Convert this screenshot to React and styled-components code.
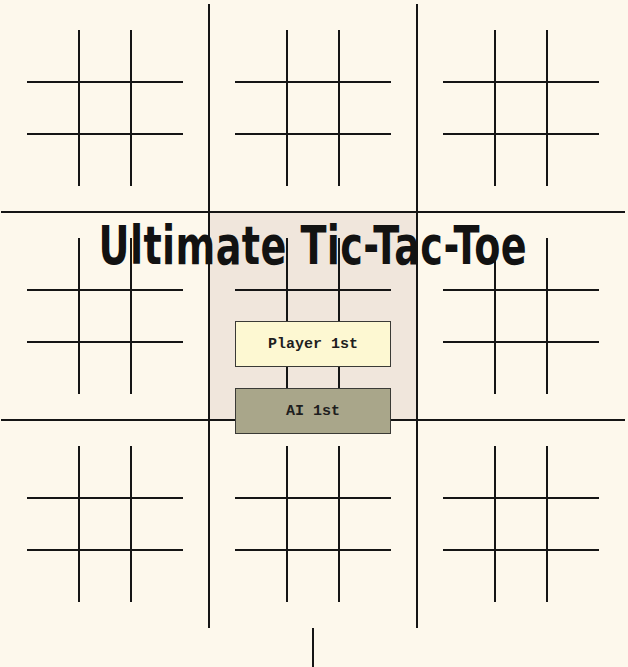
import React from "react";
import styled, { createGlobalStyle } from "styled-components";

const Global = createGlobalStyle`
  html, body { margin: 0; padding: 0; background: #fdf8ec; overflow: hidden; }
  body { font-family: "Liberation Sans", Arial, sans-serif; }
`;

const Page = styled.div`
  width: 624px;
  margin: 4px 0 0 1px;
  display: flex;
  flex-direction: column;
  align-items: center;
`;

const line = (a, b) =>
  `transparent ${a}px, #151515 ${a}px, #151515 ${b}px, transparent ${b}px`;

const Board = styled.div`
  position: relative;
  width: 624px;
  height: 624px;
  display: grid;
  grid-template-columns: repeat(3, 208px);
  grid-template-rows: repeat(3, 208px);
  background:
    linear-gradient(to right, ${line(207, 209)}, ${line(415, 417)}),
    linear-gradient(to bottom, ${line(207, 209)}, ${line(415, 417)});
`;

const BigCell = styled.div`
  padding: 1px;
  box-sizing: border-box;
  display: flex;
  align-items: center;
  justify-content: center;
  background: ${(p) => (p.$active ? "#f0e6dc" : "transparent")};
  background-clip: content-box;
`;

const SmallBoard = styled.div`
  width: 156px;
  height: 156px;
  display: grid;
  grid-template-columns: repeat(3, 52px);
  grid-template-rows: repeat(3, 52px);
  background:
    linear-gradient(to right, ${line(51, 53)}, ${line(103, 105)}),
    linear-gradient(to bottom, ${line(51, 53)}, ${line(103, 105)});
`;

const SmallCell = styled.div``;

const Overlay = styled.div`
  position: absolute;
  inset: 0;
  display: flex;
  flex-direction: column;
  align-items: center;
  padding-top: 215px;
  box-sizing: border-box;
`;

const Title = styled.h1`
  margin: 0;
  font-family: "DejaVu Sans Condensed", "Liberation Sans", sans-serif;
  font-weight: 700;
  font-size: 53px;
  line-height: 54px;
  letter-spacing: 0.5px;
  color: #121212;
  white-space: nowrap;
  transform: scaleX(0.8);
`;

const MenuButton = styled.button`
  width: 156px;
  height: 46px;
  margin-top: ${(p) => p.$gap}px;
  border: 1px solid #3a3a36;
  background: ${(p) => p.$bg};
  font-family: "Liberation Mono", "Courier New", monospace;
  font-weight: 700;
  font-size: 15px;
  color: #1e1e1e;
  padding: 0;
  cursor: pointer;
`;

const Stem = styled.div`
  width: 2px;
  height: 39px;
  background: #151515;
`;

export default function App() {
  return (
    <>
      <Global />
      <Page>
        <Board>
          {Array.from({ length: 9 }).map((_, i) => (
            <BigCell key={i} $active={i === 4}>
              <SmallBoard>
                {Array.from({ length: 9 }).map((_, j) => (
                  <SmallCell key={j} />
                ))}
              </SmallBoard>
            </BigCell>
          ))}
          <Overlay>
            <Title>Ultimate Tic-Tac-Toe</Title>
            <MenuButton $gap={48} $bg="#fdf8d2">Player 1st</MenuButton>
            <MenuButton $gap={21} $bg="#a9a68a">AI 1st</MenuButton>
          </Overlay>
        </Board>
        <Stem />
      </Page>
    </>
  );
}
